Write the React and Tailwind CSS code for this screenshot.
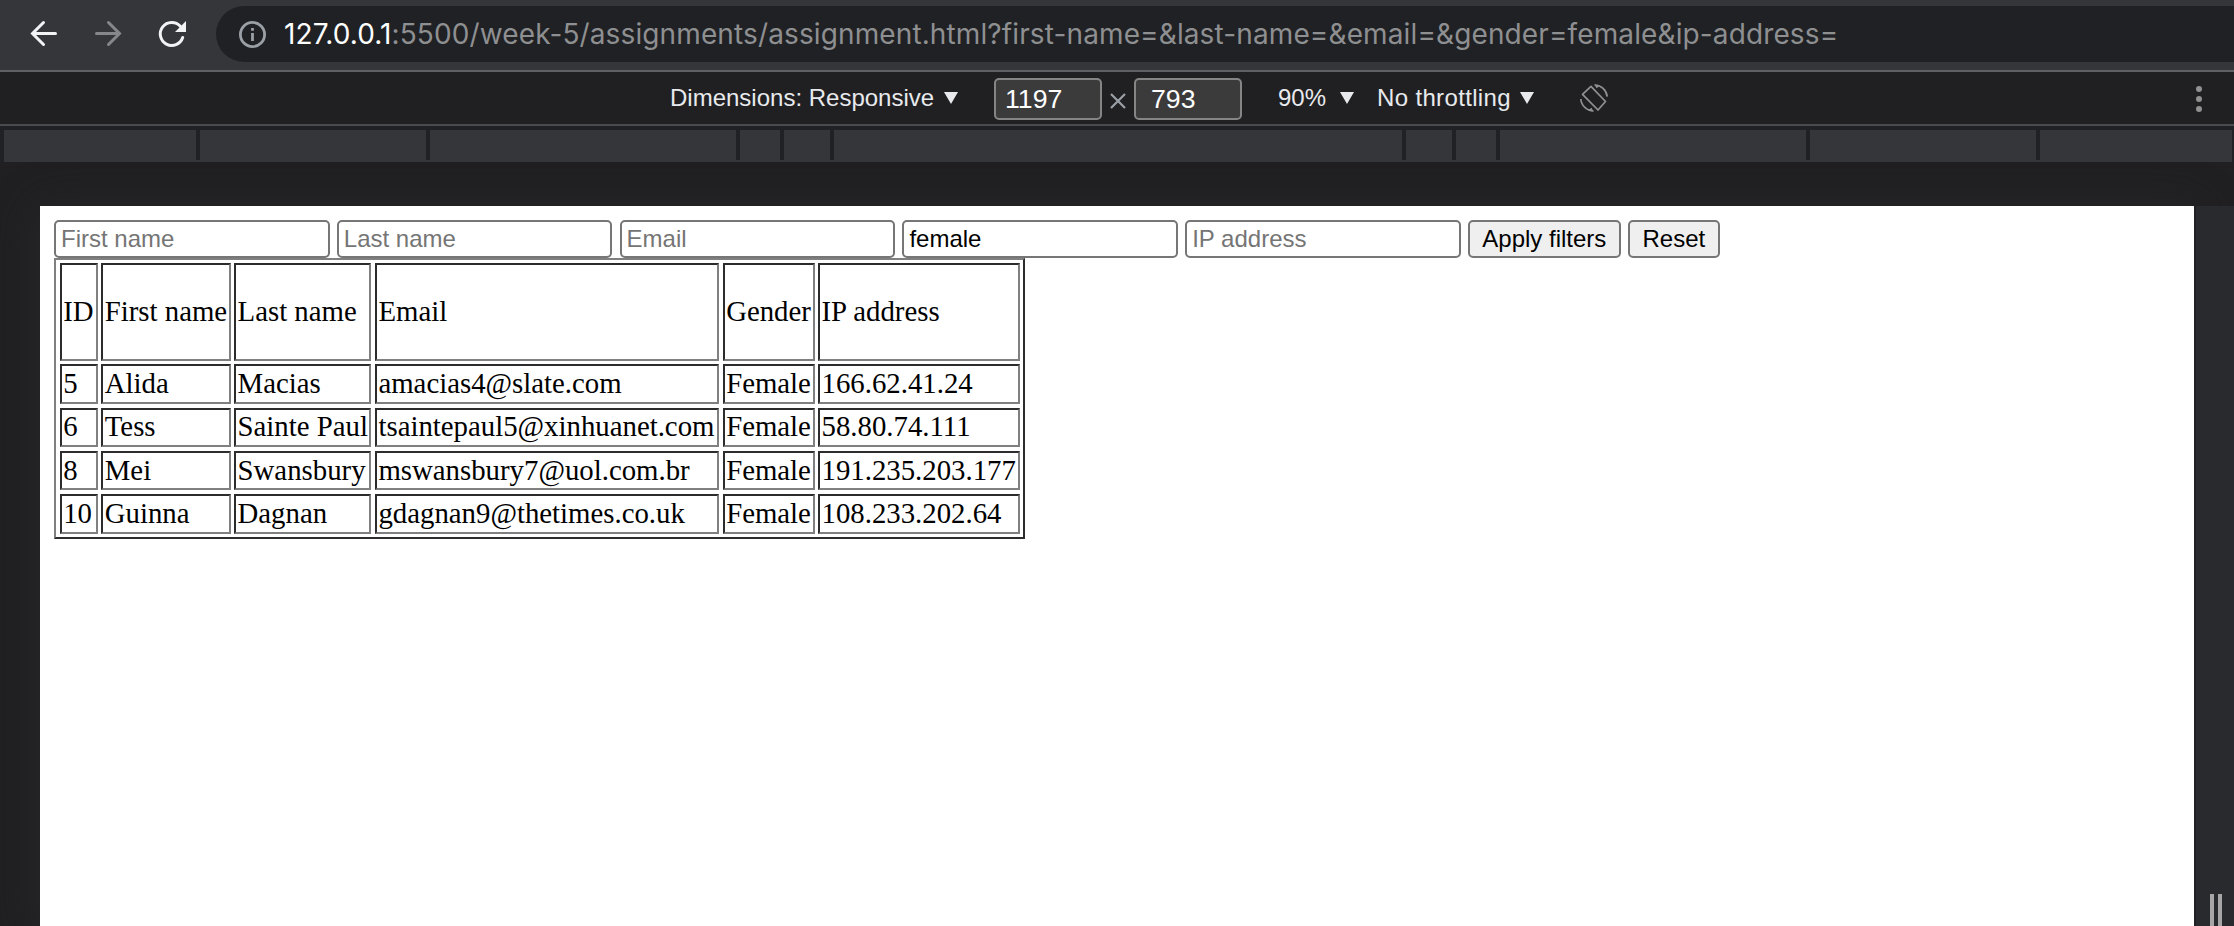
const headers = ["ID", "First name", "Last name", "Email", "Gender", "IP address"];

const rows = [
  ["5", "Alida", "Macias", "amacias4@slate.com", "Female", "166.62.41.24"],
  ["6", "Tess", "Sainte Paul", "tsaintepaul5@xinhuanet.com", "Female", "58.80.74.111"],
  ["8", "Mei", "Swansbury", "mswansbury7@uol.com.br", "Female", "191.235.203.177"],
  ["10", "Guinna", "Dagnan", "gdagnan9@thetimes.co.uk", "Female", "108.233.202.64"],
];

const filters = [
  { placeholder: "First name" },
  { placeholder: "Last name" },
  { placeholder: "Email" },
  { placeholder: "Gender", value: "female" },
  { placeholder: "IP address" },
];

const rulerSegments = [192, 226, 306, 40, 46, 568, 46, 40, 306, 226, 192];

function AddressBar() {
  return (
    <div className="flex h-[72px] shrink-0 items-start border-b-2 border-[#5f6063] bg-[#35363a] pt-1.5">
      <svg className="h-14 w-[216px] shrink-0" viewBox="0 6 216 56" fill="none">
        <path d="M55.500 33.500H33M43.500 22.500L32.500 33.500L43.500 44.500" stroke="#f1f3f4" strokeWidth="3" strokeLinecap="round" />
        <path d="M96.500 33.500H119M108.500 22.500L119.500 33.500L108.500 44.500" stroke="#86878a" strokeWidth="3" strokeLinecap="round" />
        <path d="M180.300 26.200A11.500 11.500 0 1 0 182.700 37.500" stroke="#f1f3f4" strokeWidth="3" strokeLinecap="round" />
        <path d="M186 21V32H175Z" fill="#f1f3f4" />
      </svg>
      <div className="flex h-14 flex-1 items-center rounded-l-[28px] bg-[#202124] pl-[22px]">
        <svg className="size-7 shrink-0" viewBox="0 0 28 28" fill="none">
          <circle cx="14.500" cy="14.500" r="12.100" stroke="#9aa0a6" strokeWidth="2.800" />
          <path d="M14.500 13V21M14.500 8V10.800" stroke="#9aa0a6" strokeWidth="2.800" />
        </svg>
        <div className="ml-[18px] font-[Inter,sans-serif] text-[28px] leading-9 tracking-[0.120px] whitespace-nowrap text-[#8e8f91]">
          <span className="text-white">127.0.0.1</span>
          :5500/week-5/assignments/assignment.html?first-name=&amp;last-name=&amp;email=&amp;gender=female&amp;ip-address=
        </div>
      </div>
    </div>
  );
}

function Caret() {
  return (
    <svg className="h-3 w-3.5 shrink-0" viewBox="0 0 14 12">
      <path d="M0 0H14L7 12Z" fill="#e8eaed" />
    </svg>
  );
}

function DeviceToolbar() {
  return (
    <div className="flex h-[54px] shrink-0 items-center border-b-2 border-[#4a4b4d] bg-[#202022] pl-[670px] text-2xl leading-8 whitespace-nowrap text-[#e8eaed]">
      <span className="w-[274px]">Dimensions: Responsive</span>
      <Caret />
      <div className="mt-0.5 ml-9 flex h-[42px] w-[108px] items-center rounded-[5px] border-2 border-[#858585] bg-[#3b3b3b] pl-[9px] text-[26.670px] text-white">1197</div>
      <svg className="mx-2 mt-1.5 size-4" viewBox="0 0 16 16">
        <path d="M1 1L15 15M15 1L1 15" stroke="#9aa0a6" strokeWidth="2.200" />
      </svg>
      <div className="mt-0.5 flex h-[42px] w-[108px] items-center rounded-[5px] border-2 border-[#858585] bg-[#3b3b3b] pl-[15px] text-[26.670px] text-white">793</div>
      <span className="ml-9 w-[62px]">90%</span>
      <Caret />
      <span className="ml-[23px] w-[143px] tracking-[0.350px]">No throttling</span>
      <Caret />
      <svg className="ml-[46px] size-7" viewBox="0 0 28 28" fill="none" stroke="#8f9092" strokeWidth="1.700">
        <path d="M11 2.300L25.500 17.500L18 26L2.500 10.300Z" strokeLinejoin="round" />
        <path d="M14.500 1A13 13 0 0 1 27.200 12.700M13.500 27A13 13 0 0 1 0.800 15" />
        <path d="M14.500 0.600L20 1.800L16.500 4.200ZM13.500 27.400L8 26.200L11.500 23.800Z" fill="#8f9092" stroke="none" />
      </svg>
      <svg className="mr-8 ml-auto h-7 w-1.5" viewBox="0 0 6 28" fill="#919191">
        <circle cx="3" cy="5" r="3" />
        <circle cx="3" cy="15" r="3" />
        <circle cx="3" cy="25" r="3" />
      </svg>
    </div>
  );
}

function Ruler() {
  return (
    <div className="flex h-9 shrink-0 bg-[#202124] pt-1 pr-0.5 pl-1">
      <div className="flex h-8 flex-1 gap-1 border-b-2 border-[#35363a] bg-[#202124]">
        {rulerSegments.map((width, i) => (
          <div key={i} className="h-full shrink-0 bg-[#35363a]" style={{ width }} />
        ))}
      </div>
    </div>
  );
}

function Cell({ children }) {
  return (
    <div className="flex items-center border-2 border-t-[#2c2c2c] border-r-[#808080] border-b-[#808080] border-l-[#2c2c2c] pb-0.5 pl-[1.600px]">
      {children}
    </div>
  );
}

function Page() {
  return (
    <div className="min-w-0 flex-1 bg-white pt-3.5 pl-3.5 shadow-[0_4px_40px_#28282b]">
      <form className="flex h-[38px] gap-[7.300px] text-2xl leading-8">
        {filters.map((f) => (
          <input
            key={f.placeholder}
            className="h-[38px] w-[275.500px] rounded-[5px] border-2 border-[#767676] bg-white px-[5px] text-black placeholder:text-[#757575]"
            placeholder={f.placeholder}
            defaultValue={f.value}
          />
        ))}
        <button type="button" className="h-[38px] w-[152.700px] rounded-[5px] border-2 border-[#767676] bg-[#efefef] whitespace-nowrap text-black">Apply filters</button>
        <button type="button" className="h-[38px] w-[91.700px] rounded-[5px] border-2 border-[#767676] bg-[#efefef] whitespace-nowrap text-black">Reset</button>
      </form>
      <div className="grid h-[281px] w-[971px] grid-cols-[38.200px_129.400px_137.500px_344.300px_92px_201.600px] grid-rows-[97.500px_repeat(4,39.600px)] gap-x-[3.400px] gap-y-[3.600px] border-2 border-t-[#808080] border-r-[#2c2c2c] border-b-[#2c2c2c] border-l-[#808080] pt-[3.400px] pl-[3.600px] font-['Liberation_Serif',serif] text-[28.800px] leading-8 whitespace-nowrap text-black">
        {[headers, ...rows].flatMap((row, r) => row.map((text, c) => <Cell key={`${r}-${c}`}>{text}</Cell>))}
      </div>
    </div>
  );
}

export default function App() {
  return (
    <div className="flex h-[926px] w-[2234px] flex-col overflow-hidden bg-[#202022] font-['Liberation_Sans',Arial,sans-serif]">
      <AddressBar />
      <DeviceToolbar />
      <Ruler />
      <div className="flex min-h-0 flex-1 overflow-hidden pt-11 pl-10">
        <Page />
        <div className="z-10 flex w-10 items-end gap-1 border-l-2 border-[#202124] bg-[#292a2d] pl-3.5">
          <div className="h-8 w-1 bg-[#a6a6a6]" />
          <div className="h-8 w-1 bg-[#a6a6a6]" />
        </div>
      </div>
    </div>
  );
}
